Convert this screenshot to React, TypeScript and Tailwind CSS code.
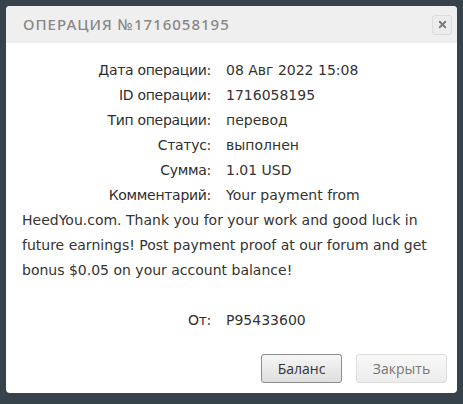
import { X } from "lucide-react";

const rows: [string, string][] = [
  ["Дата операции:", "08 Авг 2022 15:08"],
  ["ID операции:", "1716058195"],
  ["Тип операции:", "перевод"],
  ["Статус:", "выполнен"],
  ["Сумма:", "1.01 USD"],
];

const comment =
  "Your payment from HeedYou.com. Thank you for your work and good luck in future earnings! Post payment proof at our forum and get bonus $0.05 on your account balance!";

const Label = ({ children }: { children: string }) => (
  <span className="inline-block w-[189px] text-right mr-[15px] tracking-[-0.3px] whitespace-nowrap text-[#2e2e2e]">
    {children}
  </span>
);

export default function App() {
  return (
    <div className="min-h-screen bg-[#36434b] p-[6px]">
      <div className="w-[451px] rounded-[4px] bg-white overflow-hidden">
        <div className="h-[37px] bg-[#efefef] flex items-center justify-between pl-[17px] pr-[5px]">
          <h2 className="text-[15px] tracking-[1px] text-[#878787] font-['Noto_Sans',sans-serif] font-medium">
            ОПЕРАЦИЯ №1716058195
          </h2>
          <button className="w-[20px] h-[20px] flex items-center justify-center rounded-[3px] border border-[#dcdcdc] bg-[#ececec]">
            <X size={11} strokeWidth={4} className="text-[#7a7a7a]" />
          </button>
        </div>

        <div className="px-4 pt-[15px] text-[14px] leading-[25px] text-[#333] font-['DejaVu_Sans',sans-serif]">
          {rows.map(([k, v]) => (
            <div key={k}>
              <Label>{k}</Label>
              {v}
            </div>
          ))}
          <p>
            <Label>Комментарий:</Label>
            <span>{comment}</span>
          </p>
          <div className="mt-[25px]">
            <Label>От:</Label>
            P95433600
          </div>
        </div>

        <div className="flex justify-end gap-[14px] pr-[10px] pt-[21px] pb-[10px] font-['Open_Sans',sans-serif] text-[14px]">
          <button className="w-[81px] h-[29px] rounded-[3px] border border-[#8c8c8c] bg-gradient-to-b from-[#f6f6f6] to-[#dedede] text-[#333]">
            Баланс
          </button>
          <button className="w-[91px] h-[29px] rounded-[3px] border border-[#dddddd] bg-gradient-to-b from-[#f8f8f8] to-[#ececec] text-[#777]">
            Закрыть
          </button>
        </div>
      </div>
    </div>
  );
}
